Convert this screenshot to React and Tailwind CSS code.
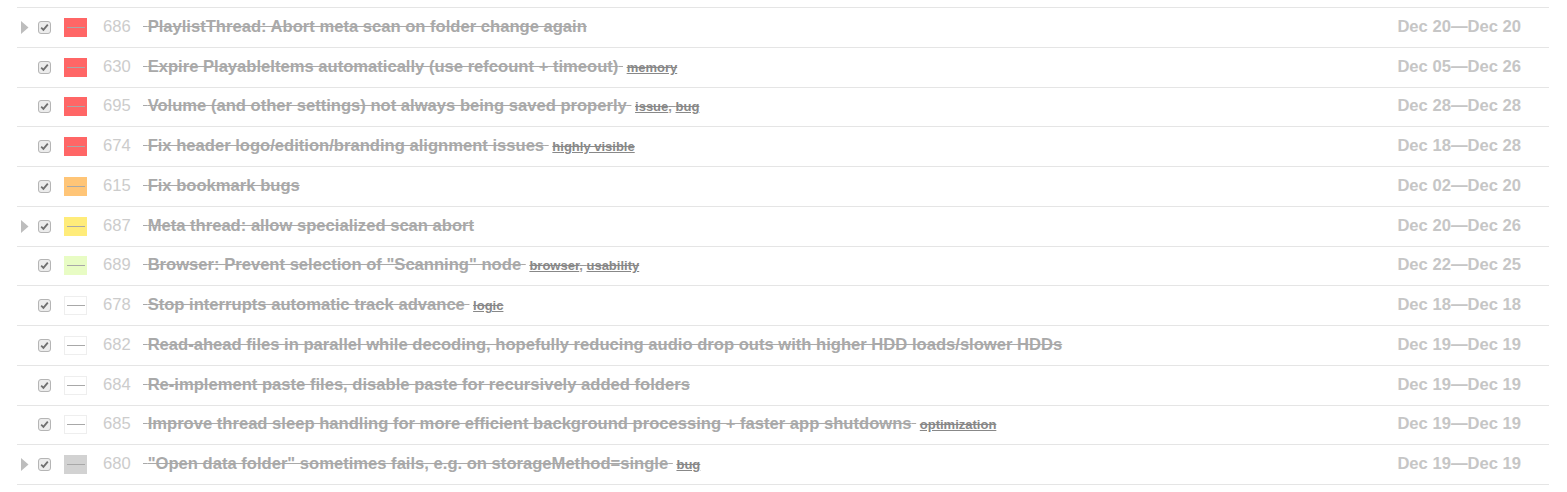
import React from 'react';

const SWATCH = {
  red: 'bg-[#ff6666]',
  orange: 'bg-[#ffc577]',
  yellow: 'bg-[#ffec7a]',
  green: 'bg-[#e8fcc4]',
  white: 'bg-white border border-[#eeeeee]',
  gray: 'bg-[#d2d2d2]',
};

const tasks = [
  { id: 686, color: 'red', expand: true, title: 'PlaylistThread: Abort meta scan on folder change again', tags: [], from: 'Dec 20', to: 'Dec 20' },
  { id: 630, color: 'red', title: 'Expire PlayableItems automatically (use refcount + timeout)', tags: ['memory'], from: 'Dec 05', to: 'Dec 26' },
  { id: 695, color: 'red', title: 'Volume (and other settings) not always being saved properly', tags: ['issue', 'bug'], from: 'Dec 28', to: 'Dec 28' },
  { id: 674, color: 'red', title: 'Fix header logo/edition/branding alignment issues', tags: ['highly visible'], from: 'Dec 18', to: 'Dec 28' },
  { id: 615, color: 'orange', title: 'Fix bookmark bugs', tags: [], from: 'Dec 02', to: 'Dec 20' },
  { id: 687, color: 'yellow', expand: true, title: 'Meta thread: allow specialized scan abort', tags: [], from: 'Dec 20', to: 'Dec 26' },
  { id: 689, color: 'green', title: 'Browser: Prevent selection of "Scanning" node', tags: ['browser', 'usability'], from: 'Dec 22', to: 'Dec 25' },
  { id: 678, color: 'white', title: 'Stop interrupts automatic track advance', tags: ['logic'], from: 'Dec 18', to: 'Dec 18' },
  { id: 682, color: 'white', title: 'Read-ahead files in parallel while decoding, hopefully reducing audio drop outs with higher HDD loads/slower HDDs', tags: [], from: 'Dec 19', to: 'Dec 19' },
  { id: 684, color: 'white', title: 'Re-implement paste files, disable paste for recursively added folders', tags: [], from: 'Dec 19', to: 'Dec 19' },
  { id: 685, color: 'white', title: 'Improve thread sleep handling for more efficient background processing + faster app shutdowns', tags: ['optimization'], from: 'Dec 19', to: 'Dec 19' },
  { id: 680, color: 'gray', expand: true, title: '"Open data folder" sometimes fails, e.g. on storageMethod=single', tags: ['bug'], from: 'Dec 19', to: 'Dec 19' },
];

const Checkbox = () => (
  <span className="w-[13px] h-[13px] rounded-[3px] border border-[#b5b5b5] bg-[#ececec] flex items-center justify-center shrink-0">
    <svg width="9" height="9" viewBox="0 0 9 9">
      <path d="M1.2 4.6 L3.4 6.8 L7.8 1.6" fill="none" stroke="#6f6f6f" strokeWidth="1.8" />
    </svg>
  </span>
);

const TaskRow = ({ task }) => (
  <div className="h-[39.75px] border-b border-[#e5e5e5] flex items-center pl-[4px] pr-[28px]">
    <div className="w-[17px] flex items-center">
      {task.expand && (
        <svg width="8" height="13" viewBox="0 0 8 13">
          <path d="M0 0 L7.5 6.5 L0 13 Z" fill="#bdbdbd" />
        </svg>
      )}
    </div>
    <Checkbox />
    <div className={`ml-[13px] w-[23px] h-[19px] flex items-center justify-center shrink-0 ${SWATCH[task.color]}`}>
      <div className="w-[18px] h-px bg-[#a8a8a8]" />
    </div>
    <div className="ml-[16px] w-[40px] text-[16.6px] text-[#cccccc]">{task.id}</div>
    <div className="flex-1 whitespace-pre">
      <span className="line-through text-[#a9a9a9] text-[16.6px] font-bold">
        {' '}{task.title}{task.tags.length > 0 ? ' ' : ''}
      </span>
      {task.tags.length > 0 && <span className="text-[13px]"> </span>}
      {task.tags.map((t, i) => (
        <React.Fragment key={t}>
          {i > 0 && <span className="text-[13px] font-bold text-[#999] line-through">, </span>}
          <span className="text-[13px] font-bold text-[#888]" style={{ textDecorationLine: 'underline line-through' }}>{t}</span>
        </React.Fragment>
      ))}
    </div>
    <div className="text-[16.6px] font-bold text-[#c6c6c6]">{task.from}—{task.to}</div>
  </div>
);

export default function App() {
  return (
    <div className="w-[1567px] h-[492px] bg-white font-['Liberation_Sans',Arial,sans-serif]">
      <div className="ml-[17px] w-[1532px] pt-[7px]">
        <div className="border-t border-[#e5e5e5]">
          {tasks.map((t) => (
            <TaskRow key={t.id} task={t} />
          ))}
        </div>
      </div>
    </div>
  );
}
